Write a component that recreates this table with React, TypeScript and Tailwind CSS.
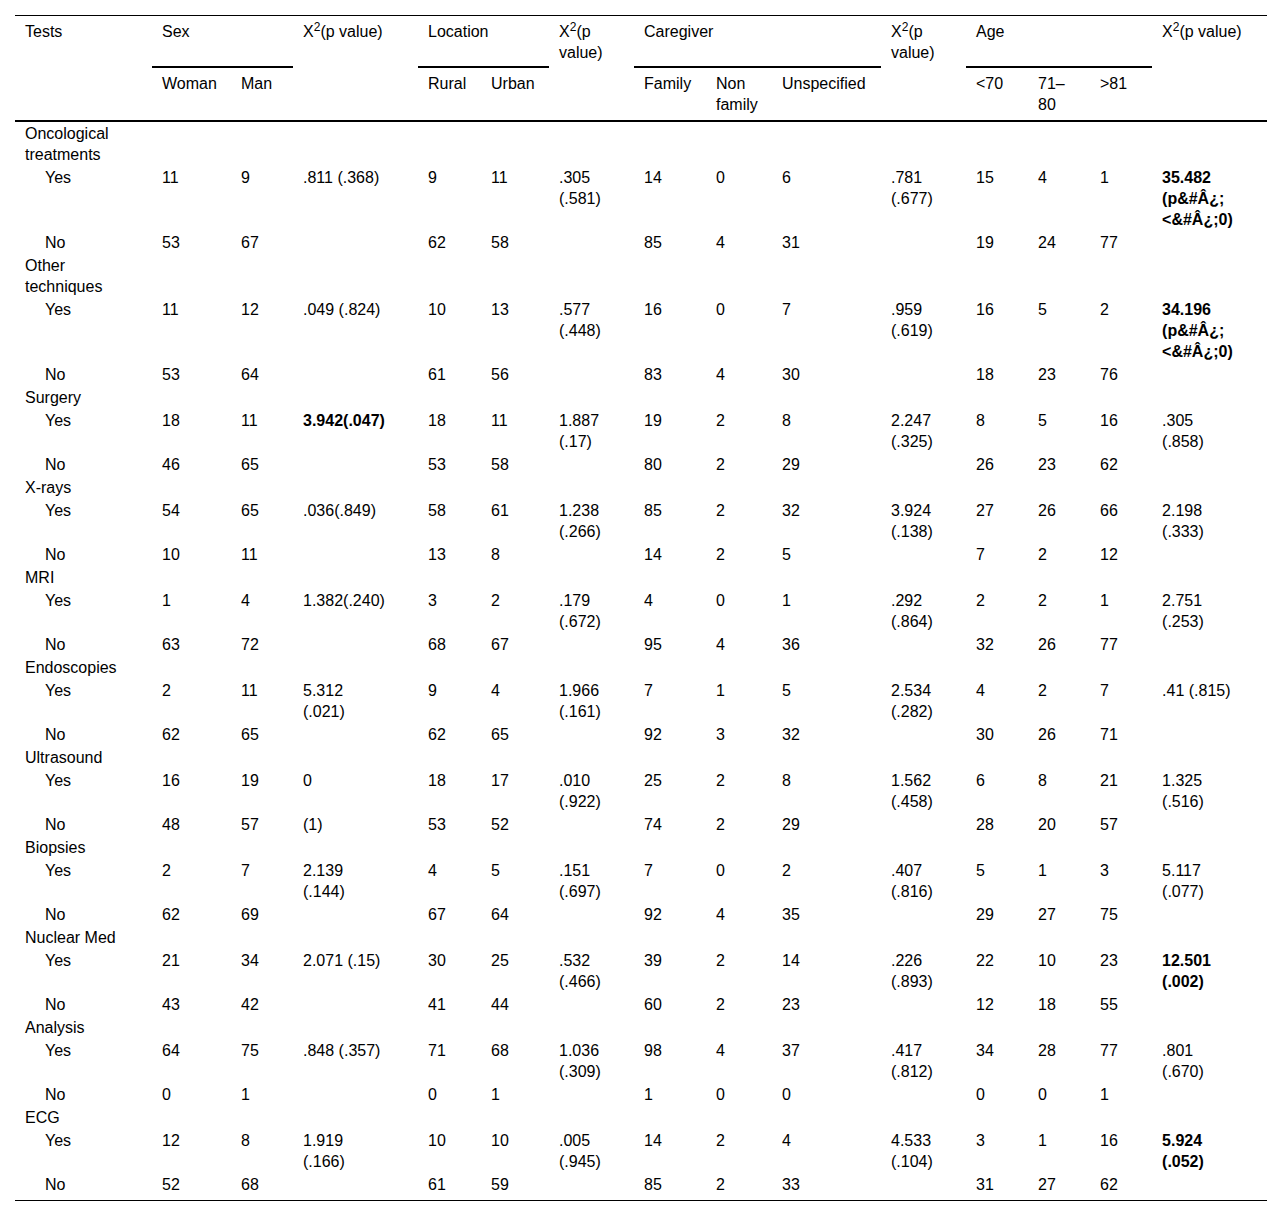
const widths = [
  'w-[137px]', 'w-[79px]', 'w-[62px]', 'w-[125px]', 'w-[63px]', 'w-[68px]', 'w-[85px]',
  'w-[72px]', 'w-[66px]', 'w-[109px]', 'w-[85px]', 'w-[62px]', 'w-[62px]', 'w-[62px]', 'w-[115px]',
];

type Group = {
  label: string;
  yes: string[];
  no: string[];
  bold?: number[];
};

// "\n" marks where the original cell wraps
const groups: Group[] = [
  {
    label: 'Oncological\ntreatments',
    yes: ['11', '9', '.811 (.368)', '9', '11', '.305\n(.581)', '14', '0', '6', '.781\n(.677)', '15', '4', '1', '35.482\n(p&#Â¿;\n<&#Â¿;0)'],
    no: ['53', '67', '', '62', '58', '', '85', '4', '31', '', '19', '24', '77', ''],
    bold: [13],
  },
  {
    label: 'Other\ntechniques',
    yes: ['11', '12', '.049 (.824)', '10', '13', '.577\n(.448)', '16', '0', '7', '.959\n(.619)', '16', '5', '2', '34.196\n(p&#Â¿;\n<&#Â¿;0)'],
    no: ['53', '64', '', '61', '56', '', '83', '4', '30', '', '18', '23', '76', ''],
    bold: [13],
  },
  {
    label: 'Surgery',
    yes: ['18', '11', '3.942(.047)', '18', '11', '1.887\n(.17)', '19', '2', '8', '2.247\n(.325)', '8', '5', '16', '.305\n(.858)'],
    no: ['46', '65', '', '53', '58', '', '80', '2', '29', '', '26', '23', '62', ''],
    bold: [2],
  },
  {
    label: 'X-rays',
    yes: ['54', '65', '.036(.849)', '58', '61', '1.238\n(.266)', '85', '2', '32', '3.924\n(.138)', '27', '26', '66', '2.198\n(.333)'],
    no: ['10', '11', '', '13', '8', '', '14', '2', '5', '', '7', '2', '12', ''],
  },
  {
    label: 'MRI',
    yes: ['1', '4', '1.382(.240)', '3', '2', '.179\n(.672)', '4', '0', '1', '.292\n(.864)', '2', '2', '1', '2.751\n(.253)'],
    no: ['63', '72', '', '68', '67', '', '95', '4', '36', '', '32', '26', '77', ''],
  },
  {
    label: 'Endoscopies',
    yes: ['2', '11', '5.312\n(.021)', '9', '4', '1.966\n(.161)', '7', '1', '5', '2.534\n(.282)', '4', '2', '7', '.41 (.815)'],
    no: ['62', '65', '', '62', '65', '', '92', '3', '32', '', '30', '26', '71', ''],
  },
  {
    label: 'Ultrasound',
    yes: ['16', '19', '0', '18', '17', '.010\n(.922)', '25', '2', '8', '1.562\n(.458)', '6', '8', '21', '1.325\n(.516)'],
    no: ['48', '57', '(1)', '53', '52', '', '74', '2', '29', '', '28', '20', '57', ''],
  },
  {
    label: 'Biopsies',
    yes: ['2', '7', '2.139\n(.144)', '4', '5', '.151\n(.697)', '7', '0', '2', '.407\n(.816)', '5', '1', '3', '5.117\n(.077)'],
    no: ['62', '69', '', '67', '64', '', '92', '4', '35', '', '29', '27', '75', ''],
  },
  {
    label: 'Nuclear Med',
    yes: ['21', '34', '2.071 (.15)', '30', '25', '.532\n(.466)', '39', '2', '14', '.226\n(.893)', '22', '10', '23', '12.501\n(.002)'],
    no: ['43', '42', '', '41', '44', '', '60', '2', '23', '', '12', '18', '55', ''],
    bold: [13],
  },
  {
    label: 'Analysis',
    yes: ['64', '75', '.848 (.357)', '71', '68', '1.036\n(.309)', '98', '4', '37', '.417\n(.812)', '34', '28', '77', '.801\n(.670)'],
    no: ['0', '1', '', '0', '1', '', '1', '0', '0', '', '0', '0', '1', ''],
  },
  {
    label: 'ECG',
    yes: ['12', '8', '1.919\n(.166)', '10', '10', '.005\n(.945)', '14', '2', '4', '4.533\n(.104)', '3', '1', '16', '5.924\n(.052)'],
    no: ['52', '68', '', '61', '59', '', '85', '2', '33', '', '31', '27', '62', ''],
    bold: [13],
  },
];

const Lines = ({ text }: { text: string }) => (
  <>
    {text.split('\n').map((line, i) => (
      <span key={i}>
        {i > 0 && <br />}
        {line}
      </span>
    ))}
  </>
);

const Chi = ({ wrap }: { wrap?: boolean }) => (
  <>
    X<sup>2</sup>(p{wrap ? <br /> : ' '}value)
  </>
);

const App = () => {
  const head1 = 'align-top text-left font-normal pl-[10px] pt-[5px] pb-[5px] whitespace-nowrap';
  const group = `${head1} border-b-2 border-black`;
  const head2 = 'align-top text-left font-normal pl-[10px] pt-[5px] pb-[5px] whitespace-nowrap border-b-2 border-black';
  const cell = 'align-top pl-[10px] py-px whitespace-nowrap';

  return (
    <div className="min-h-screen bg-white text-black font-['Liberation_Sans',Arial,sans-serif] text-[16px] leading-[21px] pt-[15px] pl-[15px]">
      <table className="table-fixed w-[1252px] border-separate border-spacing-0 border-t border-b border-black">
        <colgroup>
          {widths.map((w, i) => (
            <col key={i} className={w} />
          ))}
        </colgroup>
        <thead>
          <tr>
            <th className={head1}>Tests</th>
            <th colSpan={2} className={group}>Sex</th>
            <th className={head1}><Chi /></th>
            <th colSpan={2} className={group}>Location</th>
            <th className={head1}><Chi wrap /></th>
            <th colSpan={3} className={group}>Caregiver</th>
            <th className={head1}><Chi wrap /></th>
            <th colSpan={3} className={group}>Age</th>
            <th className={head1}><Chi /></th>
          </tr>
          <tr>
            <th className={head2}></th>
            <th className={head2}>Woman</th>
            <th className={head2}>Man</th>
            <th className={head2}></th>
            <th className={head2}>Rural</th>
            <th className={head2}>Urban</th>
            <th className={head2}></th>
            <th className={head2}>Family</th>
            <th className={head2}>Non<br />family</th>
            <th className={head2}>Unspecified</th>
            <th className={head2}></th>
            <th className={head2}>&lt;70</th>
            <th className={head2}>71–<br />80</th>
            <th className={head2}>&gt;81</th>
            <th className={head2}></th>
          </tr>
        </thead>
        <tbody>
          {groups.map((g, gi) => {
            const last = gi === groups.length - 1;
            const noCell = `align-top pl-[10px] pt-px whitespace-nowrap ${last ? 'pb-[5px]' : 'pb-px'}`;
            return [
              <tr key={`${gi}-label`}>
                <td className={cell}><Lines text={g.label} /></td>
                <td colSpan={14} className={cell}></td>
              </tr>,
              <tr key={`${gi}-yes`}>
                <td className={`${cell} pl-[30px]`}>Yes</td>
                {g.yes.map((v, i) => (
                  <td key={i} className={`${cell} ${g.bold?.includes(i) ? 'font-bold' : ''}`}>
                    <Lines text={v} />
                  </td>
                ))}
              </tr>,
              <tr key={`${gi}-no`}>
                <td className={`${noCell} pl-[30px]`}>No</td>
                {g.no.map((v, i) => (
                  <td key={i} className={noCell}>
                    <Lines text={v} />
                  </td>
                ))}
              </tr>,
            ];
          })}
        </tbody>
      </table>
    </div>
  );
};

export default App;
